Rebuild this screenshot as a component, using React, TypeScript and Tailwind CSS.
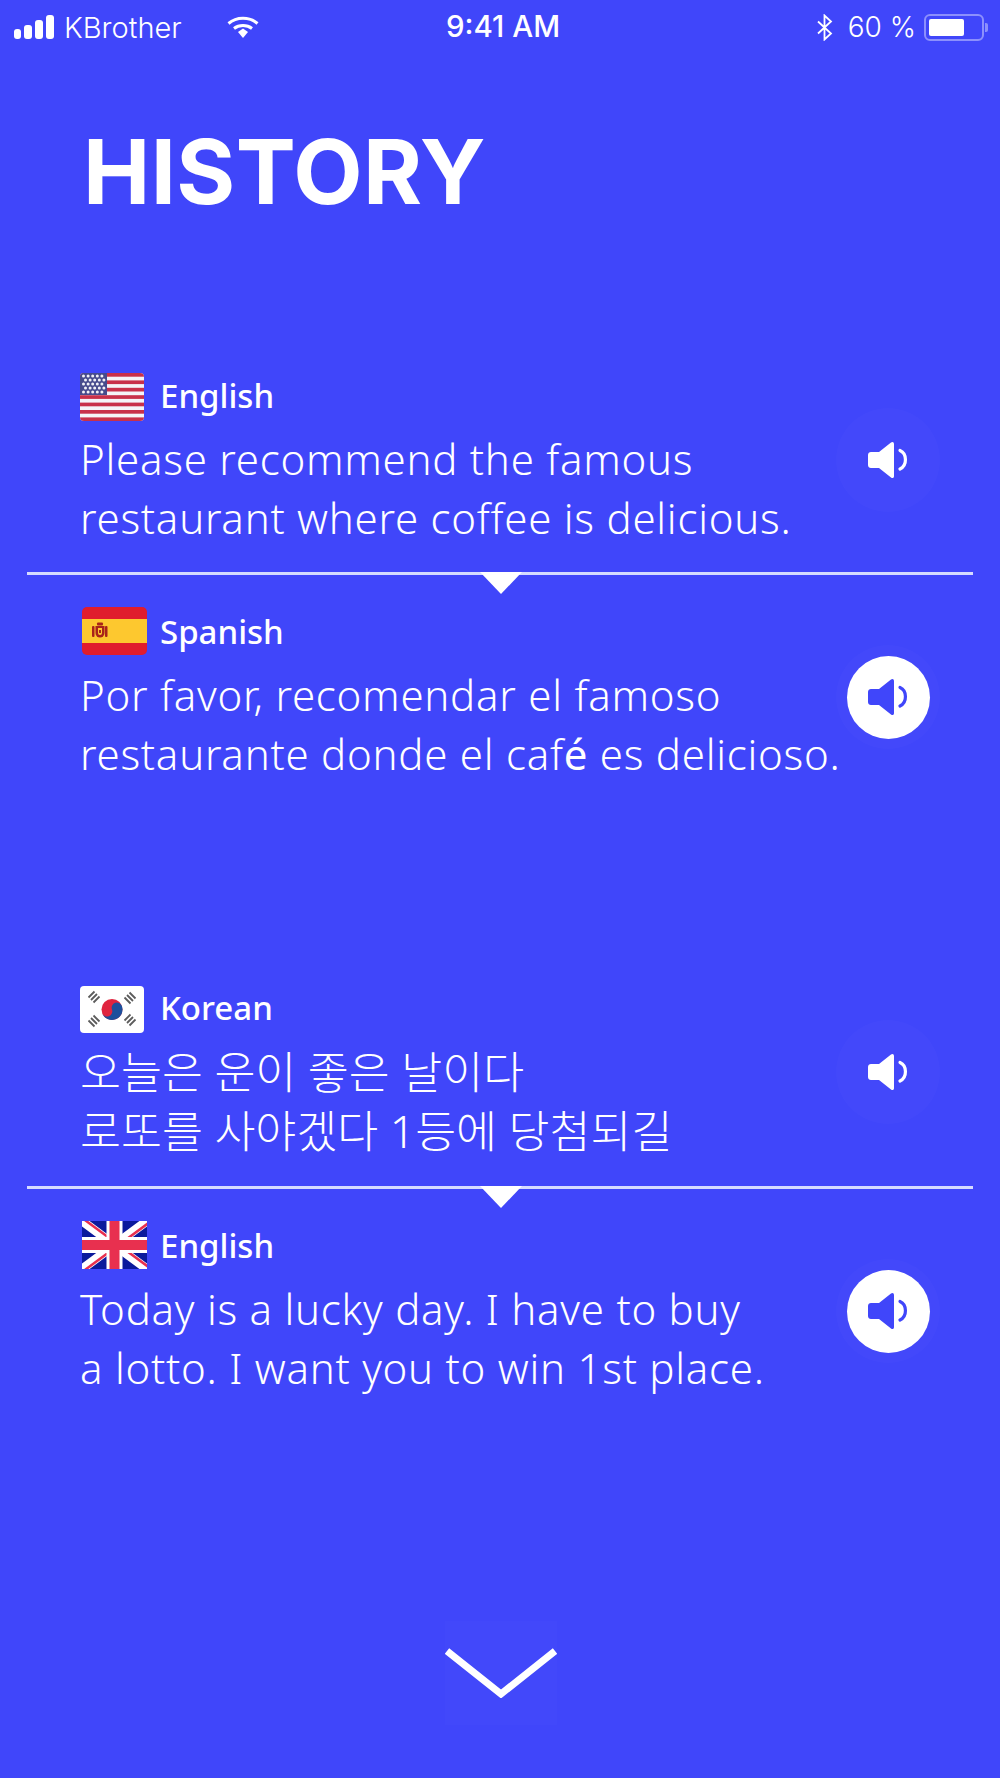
import React from "react";

const Speaker = ({ color }: { color: string }) => (
  <svg width="41" height="38" viewBox="0 0 41 38" fill="none">
    <path d="M3 11h8L23 1.500C24.500.4 26 1 26 3v32c0 2-1.500 2.600-3 1.500L11 27H3c-1.700 0-3-1.300-3-3V14c0-1.700 1.300-3 3-3z" fill={color} />
    <path d="M32 9.500c7 3 7.500 15 0 18.500" stroke={color} strokeWidth="3.200" strokeLinecap="round" />
  </svg>
);

const SpeakerButton = ({ active }: { active: boolean }) => (
  <div className={active ? "mt-[38px] flex h-[104px] w-[104px] shrink-0 items-center justify-center rounded-full bg-white/[0.015]" : "mt-[35px] flex h-[104px] w-[104px] shrink-0 items-center justify-center rounded-full bg-white/[0.015]"}>
    {active ? (
      <div className="flex h-[83px] w-[83px] items-center justify-center rounded-full bg-white">
        <Speaker color="#4046fa" />
      </div>
    ) : (
      <Speaker color="#ffffff" />
    )}
  </div>
);

const UsFlag = () => (
  <svg width="64" height="48" viewBox="0 0 64 48" className="rounded-[4px]">
    <rect width="64" height="48" fill="#f4f4f8" />
    {[0, 1, 2, 3, 4, 5, 6].map((i) => (
      <rect key={i} y={i * 7.4} width="64" height="3.700" fill="#c8304a" />
    ))}
    <rect width="27" height="22" fill="#474b8c" />
    {[0, 1, 2, 3, 4].map((r) =>
      [0, 1, 2, 3, 4].map((c) => (
        <circle key={`${r}-${c}`} cx={3.500 + c * 4.600 + (r % 2) * 2} cy={3 + r * 4} r="1.500" fill="#f1f1f6" />
      ))
    )}
  </svg>
);

const EsFlag = () => (
  <svg width="65" height="48" viewBox="0 0 65 48" className="rounded-[5px]">
    <rect width="65" height="48" fill="#e01c2d" />
    <rect y="12" width="65" height="24" fill="#fdc82f" />
    <g fill="#a8231a">
      <rect x="10" y="19" width="2.500" height="11" rx="1" />
      <rect x="23" y="19" width="2.500" height="11" rx="1" />
      <rect x="15" y="15.500" width="6" height="3" rx="1" />
      <path d="M13.500 19h9v7a4.500 4.500 0 0 1-9 0z" />
    </g>
    <path d="M16 21h4v5a2 2 0 0 1-4 0z" fill="#fdc82f" />
    <rect x="17" y="23" width="2" height="3" fill="#a8231a" />
  </svg>
);

const KrFlag = () => (
  <svg width="64" height="47" viewBox="0 0 64 47" className="rounded-[4px]">
    <rect width="64" height="47" fill="#ffffff" />
    <circle cx="32" cy="23.500" r="10.500" fill="#e0243f" />
    <path d="M21.500 23.500a5.250 5.250 0 0 0 10.500 0 5.250 5.250 0 0 1 10.500 0 10.500 10.500 0 0 1-21 0z" fill="#1d4f9c" transform="rotate(-20 32 23.500)" />
    <g stroke="#5c5c5c" strokeWidth="1.800">
      <path d="M11 13l6-6M13.500 15.500l6-6M8.500 10.500l6-6" transform="translate(0 1)" />
      <path d="M47 7l6 6M44.500 9.500l6 6M49.500 4.500l6 6" transform="translate(0 2)" />
      <path d="M11 33l6 6M8.500 35.500l6 6M13.500 30.500l6 6" transform="translate(0 -1)" />
      <path d="M47 39l6-6M44.500 36.500l6-6M49.500 41.500l6-6" transform="translate(0 -2)" />
    </g>
  </svg>
);

const UkFlag = () => (
  <svg width="65" height="48" viewBox="0 0 65 48">
    <rect width="65" height="48" fill="#0b1a9c" />
    <path d="M0 0l65 48M65 0L0 48" stroke="#ffffff" strokeWidth="9" />
    <path d="M0 0l32.500 24M65 48L32.500 24" stroke="#e8304f" strokeWidth="2.500" transform="translate(1.500 -2)" />
    <path d="M65 0L32.500 24M0 48l32.500-24" stroke="#e8304f" strokeWidth="2.500" transform="translate(1.500 2)" />
    <path d="M32.500 0v48M0 24h65" stroke="#ffffff" strokeWidth="16" />
    <path d="M32.500 0v48M0 24h65" stroke="#e8304f" strokeWidth="10" />
  </svg>
);

type BlockProps = {
  flag: React.ReactNode;
  label: string;
  lines: React.ReactNode[];
  active?: boolean;
  inset?: boolean;
  korean?: boolean;
};

const Block = ({ flag, label, lines, active = false, inset = false, korean = false }: BlockProps) => (
  <div className="flex justify-between pl-[80px] pr-[60px]">
    <div className="min-w-0 flex-1">
      <div className={inset ? "flex h-[48px] items-center gap-[13px] pl-[2px]" : "flex h-[48px] items-center gap-[16px]"}>
        {flag}
        <span className={inset ? "text-[33px] font-medium leading-none" : "mb-[3px] text-[33px] font-medium leading-none"}>{label}</span>
      </div>
      <div
        className={
          korean
            ? "mt-[9px] whitespace-nowrap text-[44.500px] font-light leading-[59px]"
            : inset
              ? "mt-[10px] whitespace-nowrap text-[42px] font-light leading-[59px] tracking-[0.75px]"
              : "mt-[8px] whitespace-nowrap text-[42px] font-light leading-[59px] tracking-[0.75px]"
        }
      >
        {lines.map((l, i) => (
          <div key={i}>{l}</div>
        ))}
      </div>
    </div>
    <SpeakerButton active={active} />
  </div>
);

const Divider = ({ wide = false }: { wide?: boolean }) => (
  <div className={wide ? "relative mx-[27px] mt-[26px] h-[3px] bg-[#d5dbff]" : "relative mx-[27px] mt-[25px] h-[3px] bg-[#d5dbff]"}>
    <svg width="42" height="22" viewBox="0 0 42 22" className="absolute left-[453px] top-0">
      <path d="M0 0h42L21 22z" fill="#ffffff" />
    </svg>
  </div>
);

export default function App() {
  return (
    <div
      className="flex h-[1778px] w-[1000px] flex-col overflow-hidden bg-[#4046fa] text-white"
      style={{ fontFamily: '"Noto Sans", "Noto Sans CJK KR", sans-serif' }}
    >
      <div className="relative flex h-[54px] shrink-0 items-center pl-[14px] pr-[12px] font-['Inter',sans-serif]">
        <div className="flex h-[24px] items-end gap-[3px]">
          <div className="h-[10px] w-[7px] rounded-[3px] bg-white" />
          <div className="h-[14px] w-[8px] rounded-[3px] bg-white" />
          <div className="h-[19px] w-[8px] rounded-[3px] bg-white" />
          <div className="h-[24px] w-[8px] rounded-[3px] bg-white" />
        </div>
        <span className="ml-[10px] text-[29px] font-light leading-none">KBrother</span>
        <svg width="32" height="22" viewBox="0 0 32 22" fill="none" className="ml-[45px]">
          <path d="M1.500 7.500C9.500 0.500 22.500 0.500 30.500 7.500" stroke="#fff" strokeWidth="3" />
          <path d="M7 12.500c5-4 13-4 18 0" stroke="#fff" strokeWidth="3" />
          <path d="M11 16l5-3.500 5 3.500-5 6z" fill="#fff" />
        </svg>
        <span className="absolute left-[446px] text-[29.500px] font-medium leading-none">9:41 AM</span>
        <svg width="16" height="27" viewBox="0 0 16 27" fill="none" className="ml-auto">
          <path d="M1 7.500l13 12-6.500 6V1.500l6.500 6-13 12" stroke="#fff" strokeWidth="1.800" />
        </svg>
        <span className="ml-[15px] text-[28px] font-light leading-none">60 %</span>
        <div className="ml-[8px] flex h-[27px] w-[60px] items-center rounded-[6px] border-2 border-white/40 p-[3px]">
          <div className="h-full w-[35px] rounded-[2px] bg-white" />
        </div>
        <div className="ml-[1px] h-[9px] w-[3px] rounded-r-[2px] bg-white/40" />
      </div>

      <h1 className="mt-[58px] h-[120px] shrink-0 pl-[83px] font-['Inter',sans-serif] text-[90px] font-bold leading-[120px] tracking-[0.4px]">
        HISTORY
      </h1>

      <div className="mt-[141px]">
        <Block
          flag={<UsFlag />}
          label="English"
          lines={["Please recommend the famous", "restaurant where coffee is delicious."]}
        />
        <Divider />
        <div className="mt-[32px]">
          <Block
            inset
            active
            flag={<EsFlag />}
            label="Spanish"
            lines={[
              "Por favor, recomendar el famoso",
              <>restaurante donde el caf<span className="font-normal">é</span> es delicioso.</>,
            ]}
          />
        </div>
      </div>

      <div className="mt-[202px]">
        <Block
          korean
          flag={<KrFlag />}
          label="Korean"
          lines={["오늘은 운이 좋은 날이다", "로또를 사야겠다 1등에 당첨되길"]}
        />
        <Divider wide />
        <div className="mt-[32px]">
          <Block
            inset
            active
            flag={<UkFlag />}
            label="English"
            lines={["Today is a lucky day. I have to buy", "a lotto. I want you to win 1st place."]}
          />
        </div>
      </div>

      <div className="mt-[224px] flex justify-center pl-[2px]">
        <div className="flex h-[104px] w-[112px] items-center justify-center bg-white/[0.01]">
          <svg width="112" height="50" viewBox="0 0 112 50" fill="none">
            <path d="M2 3l54 43 54-43" stroke="#fff" strokeWidth="7" />
          </svg>
        </div>
      </div>
    </div>
  );
}
